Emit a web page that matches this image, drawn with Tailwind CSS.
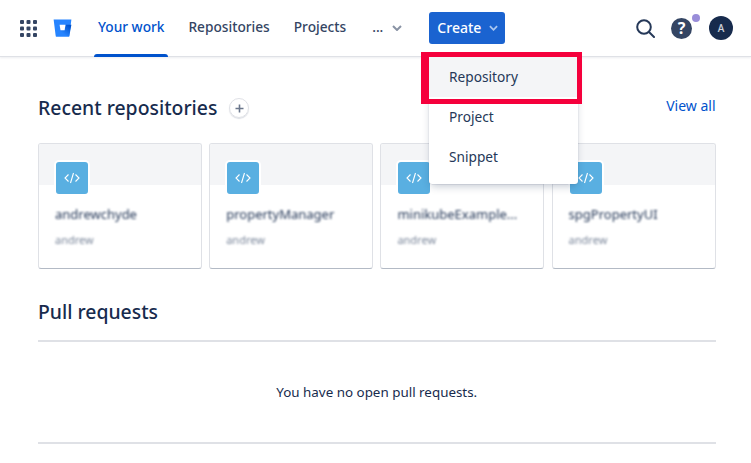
<!DOCTYPE html>
<html lang="en">
<head>
  <meta charset="UTF-8" />
  <title>Bitbucket</title>
  <script src="https://cdn.jsdelivr.net/npm/@tailwindcss/browser@4"></script>
</head>
<body class="bg-white h-[463px] overflow-hidden relative font-['Noto_Sans',sans-serif] text-[#172b4d]">

  <!-- top bar -->
  <header class="h-[57px] flex items-center border-b border-[#dfe1e6] shadow-[0_1px_2px_rgba(9,30,66,0.08)] pl-[20px] pr-[18px] relative">
    <svg class="w-[17px] h-[17px]" viewBox="0 0 17 17" fill="#344563">
      <rect x="0" y="0" width="4" height="4" rx="1"/><rect x="6.5" y="0" width="4" height="4" rx="1"/><rect x="13" y="0" width="4" height="4" rx="1"/>
      <rect x="0" y="6.5" width="4" height="4" rx="1"/><rect x="6.5" y="6.5" width="4" height="4" rx="1"/><rect x="13" y="6.5" width="4" height="4" rx="1"/>
      <rect x="0" y="13" width="4" height="4" rx="1"/><rect x="6.5" y="13" width="4" height="4" rx="1"/><rect x="13" y="13" width="4" height="4" rx="1"/>
    </svg>
    <svg class="w-[19px] h-[18px] ml-[16px]" viewBox="0 0 19 18">
      <defs><linearGradient id="bb" x1="1" y1="0.2" x2="0.45" y2="0.75"><stop offset="0" stop-color="#0052cc"/><stop offset="1" stop-color="#2684ff"/></linearGradient></defs>
      <path d="M0.6 0.5 H18.4 L16.2 17.5 H2.8 Z" fill="#2684ff"/>
      <path d="M18.4 5.8 H12.6 L11.7 11.3 H7.6 L3 17 Q3 17.5 3.5 17.5 H15.8 Q16.2 17.5 16.3 17 Z" fill="url(#bb)"/>
      <path d="M6.6 5.8 H12.5 L11.6 11.3 H7.5 Z" fill="#fff"/>
    </svg>

    <nav class="flex items-center h-full ml-[22px] text-[13.7px] font-medium text-[#344563]">
      <a class="relative h-full flex items-center px-[4px] pb-[1px] text-[#0052cc]">Your work
        <span class="absolute left-0 right-0 bottom-[-1px] h-[3px] rounded-t-sm bg-[#0052cc]"></span>
      </a>
      <a class="ml-[16px] px-[4px] pb-[1px]">Repositories</a>
      <a class="ml-[16px] px-[4px] pb-[1px]">Projects</a>
      <a class="ml-[18px] px-[4px] pb-[1px] flex items-center gap-[9px]">...
        <svg class="w-[10px] h-[6px] mt-[1px]" viewBox="0 0 10 6" fill="none" stroke="#8993a4" stroke-width="2"><path d="M1 1l4 4 4-4"/></svg>
      </a>
    </nav>

    <button class="ml-[23px] h-[32px] w-[76px] rounded-[3px] bg-[#1a63d0] text-white text-[14px] font-medium flex items-center pl-[8px] pb-[1px] gap-[8px]">Create
      <svg class="w-[9px] h-[6px] mt-[1px]" viewBox="0 0 10 6" fill="none" stroke="#a9c6f0" stroke-width="2"><path d="M1 1l4 4 4-4"/></svg>
    </button>

    <div class="ml-auto flex items-center">
      <svg class="w-[19px] h-[19px]" viewBox="0 0 19 19" fill="none" stroke="#253858" stroke-width="2"><circle cx="8" cy="8" r="6.8"/><path d="M13 13l5 5" stroke-linecap="round"/></svg>
      <div class="relative ml-[16px] w-[21px] h-[21px] rounded-full bg-[#344563] text-white flex items-center justify-center text-[16px] font-bold leading-none">?
        <span class="absolute top-[-4px] right-[-8px] w-[8px] h-[8px] rounded-full bg-[#998dd9]"></span>
      </div>
      <div class="ml-[17px] w-[24px] h-[24px] rounded-full bg-[#172b4d] text-white/80 flex items-center justify-center text-[10px] font-medium">A</div>
    </div>
  </header>

  <main class="pl-[38px] pr-[35.5px]">
    <div class="flex items-center justify-between pt-[37px]">
      <div class="flex items-center gap-[12px]">
        <h2 class="text-[19.4px] leading-[28px] font-medium text-[#172b4d]">Recent repositories</h2>
        <span class="w-[20px] h-[20px] rounded-full border border-[#dfe1e6] shadow-[0_1px_1px_rgba(9,30,66,0.15)] flex items-center justify-center">
          <svg class="w-[9px] h-[9px]" viewBox="0 0 9 9" stroke="#6b778c" stroke-width="1.6"><path d="M4.5 0.5v8M0.5 4.5h8"/></svg>
        </span>
      </div>
      <a class="text-[14px] text-[#0052cc] mb-[6px]">View all</a>
    </div>

    <!-- repo cards -->
    <div class="grid grid-cols-4 gap-x-[7.3px] mt-[21px]">
      <div class="h-[126px] rounded-[3px] border border-[#dfe1e6] border-b-[#b3bac5] overflow-hidden">
        <div class="h-[41px] bg-[#f4f5f7]"></div>
        <div class="relative px-[16px] pt-[20px]">
          <div class="absolute left-[15px] top-[-25px] w-[36px] h-[36px] rounded-[5px] border-2 border-white bg-[#59afe1] flex items-center justify-center">
            <svg class="w-[16px] h-[12px]" viewBox="0 0 16 12" fill="none" stroke="#fff" stroke-width="1.1"><path d="M4.5 2.5L1 6l3.5 3.5M11.5 2.5L15 6l-3.5 3.5M9.5 1L6.5 11"/></svg>
          </div>
          <p class="text-[13px] leading-[18px] text-[#253858] blur-[1.2px]">andrewchyde</p>
          <p class="mt-[9px] text-[11px] leading-[16px] text-[#7a869a] blur-[1.2px]">andrew</p>
        </div>
      </div>
      <div class="h-[126px] rounded-[3px] border border-[#dfe1e6] border-b-[#b3bac5] overflow-hidden">
        <div class="h-[41px] bg-[#f4f5f7]"></div>
        <div class="relative px-[16px] pt-[20px]">
          <div class="absolute left-[15px] top-[-25px] w-[36px] h-[36px] rounded-[5px] border-2 border-white bg-[#59afe1] flex items-center justify-center">
            <svg class="w-[16px] h-[12px]" viewBox="0 0 16 12" fill="none" stroke="#fff" stroke-width="1.1"><path d="M4.5 2.5L1 6l3.5 3.5M11.5 2.5L15 6l-3.5 3.5M9.5 1L6.5 11"/></svg>
          </div>
          <p class="text-[13px] leading-[18px] text-[#253858] blur-[1.2px]">propertyManager</p>
          <p class="mt-[9px] text-[11px] leading-[16px] text-[#7a869a] blur-[1.2px]">andrew</p>
        </div>
      </div>
      <div class="h-[126px] rounded-[3px] border border-[#dfe1e6] border-b-[#b3bac5] overflow-hidden">
        <div class="h-[41px] bg-[#f4f5f7]"></div>
        <div class="relative px-[16px] pt-[20px]">
          <div class="absolute left-[15px] top-[-25px] w-[36px] h-[36px] rounded-[5px] border-2 border-white bg-[#59afe1] flex items-center justify-center">
            <svg class="w-[16px] h-[12px]" viewBox="0 0 16 12" fill="none" stroke="#fff" stroke-width="1.1"><path d="M4.5 2.5L1 6l3.5 3.5M11.5 2.5L15 6l-3.5 3.5M9.5 1L6.5 11"/></svg>
          </div>
          <p class="text-[13px] leading-[18px] text-[#253858] blur-[1.2px] whitespace-nowrap">minikubeExample...</p>
          <p class="mt-[9px] text-[11px] leading-[16px] text-[#7a869a] blur-[1.2px]">andrew</p>
        </div>
      </div>
      <div class="h-[126px] rounded-[3px] border border-[#dfe1e6] border-b-[#b3bac5] overflow-hidden">
        <div class="h-[41px] bg-[#f4f5f7]"></div>
        <div class="relative px-[16px] pt-[20px]">
          <div class="absolute left-[15px] top-[-25px] w-[36px] h-[36px] rounded-[5px] border-2 border-white bg-[#59afe1] flex items-center justify-center">
            <svg class="w-[16px] h-[12px]" viewBox="0 0 16 12" fill="none" stroke="#fff" stroke-width="1.1"><path d="M4.5 2.5L1 6l3.5 3.5M11.5 2.5L15 6l-3.5 3.5M9.5 1L6.5 11"/></svg>
          </div>
          <p class="text-[13px] leading-[18px] text-[#253858] blur-[1.2px]">spgPropertyUI</p>
          <p class="mt-[9px] text-[11px] leading-[16px] text-[#7a869a] blur-[1.2px]">andrew</p>
        </div>
      </div>
    </div>

    <!-- pull requests -->
    <h2 class="mt-[29px] text-[19.4px] leading-[28px] font-medium text-[#172b4d] pb-[14px] border-b-2 border-[#dfe1e6]">Pull requests</h2>
    <p class="h-[102px] flex items-center justify-center text-[13.4px] text-[#172b4d] border-b-2 border-[#dfe1e6]">You have no open pull requests.</p>
  </main>

  <!-- create menu -->
  <div class="absolute left-[429px] top-[56px] w-[149px] h-[128px] pt-[1px] pb-[7px] bg-white rounded-b-[3px] shadow-[0_4px_8px_-2px_rgba(9,30,66,0.25),0_0_1px_rgba(9,30,66,0.31)] text-[13.7px] text-[#253858]">
    <div class="h-[40px] flex items-center pl-[20px] bg-[#f4f5f7]">Repository</div>
    <div class="h-[40px] flex items-center pl-[20px]">Project</div>
    <div class="h-[40px] flex items-center pl-[20px]">Snippet</div>
  </div>
  <!-- annotation box -->
  <div class="absolute left-[421px] top-[52px] w-[161px] h-[52px] border-[#f5003c] border-t-[5px] border-b-[5px] border-r-[5px] border-l-[8px]"></div>
</body>
</html>
